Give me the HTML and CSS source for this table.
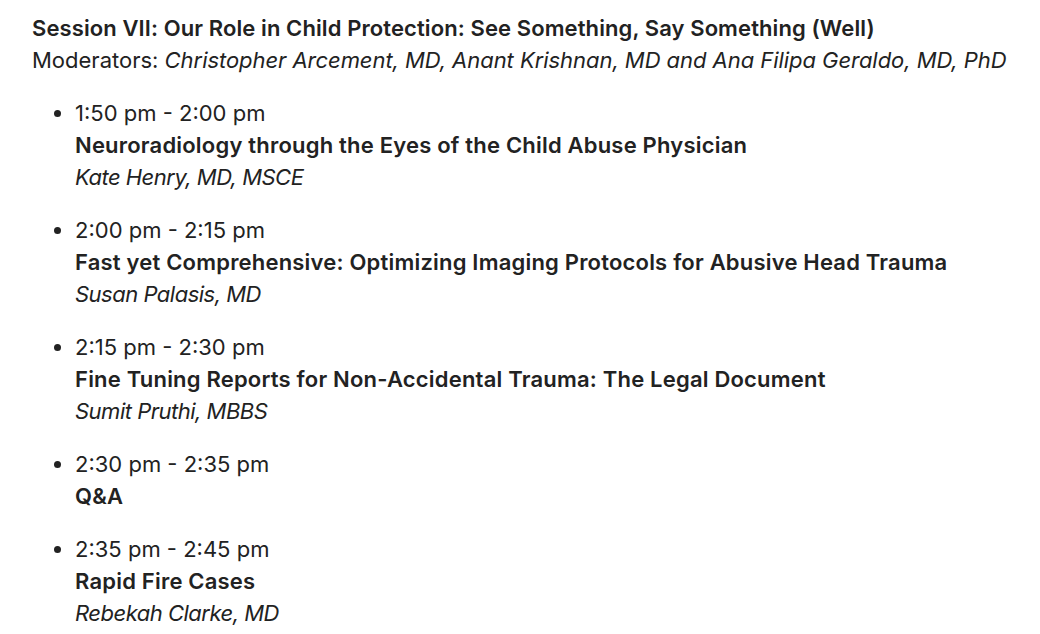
FILE: index.html
```html
<!DOCTYPE html>
<html>
<head>
<meta charset="utf-8">
<link rel="stylesheet" href="styles.css">
</head>
<body>
<div class="session">
  <div class="head">
    <strong class="title">Session VII: Our Role in Child Protection: See Something, Say Something (Well)</strong><br>
    Moderators: <em class="mods">Christopher Arcement, MD, Anant Krishnan, MD and Ana Filipa Geraldo, MD, PhD</em>
  </div>
  <ul class="talks">
    <li>1:50 pm - 2:00 pm<br><strong>Neuroradiology through the Eyes of the Child Abuse Physician</strong><br><em>Kate Henry, MD, MSCE</em></li>
    <li>2:00 pm - 2:15 pm<br><strong>Fast yet Comprehensive: Optimizing Imaging Protocols for Abusive Head Trauma</strong><br><em>Susan Palasis, MD</em></li>
    <li>2:15 pm - 2:30 pm<br><strong>Fine Tuning Reports for Non-Accidental Trauma: The Legal Document</strong><br><em>Sumit Pruthi, MBBS</em></li>
    <li>2:30 pm - 2:35 pm<br><strong>Q&amp;A</strong></li>
    <li>2:35 pm - 2:45 pm<br><strong>Rapid Fire Cases</strong><br><em>Rebekah Clarke, MD</em></li>
  </ul>
</div>
</body>
</html>
```
FILE: styles.css
```css
html, body {
  margin: 0;
  background: #fff;
}
body {
  font-family: Inter, "Noto Sans", sans-serif;
  font-size: 22px;
  line-height: 32px;
  color: #222;
}
.session {
  padding: 12px 0 12px 32px;
}
strong {
  font-weight: 600;
  letter-spacing: 0.2px;
}
.title {
  letter-spacing: 0.1px;
}
em {
  letter-spacing: -0.5px;
}
.head .mods {
  letter-spacing: -0.05px;
}
.talks {
  margin: 21px 0 0;
  padding-left: 43px;
}
.talks li {
  margin-bottom: 21px;
}
```
